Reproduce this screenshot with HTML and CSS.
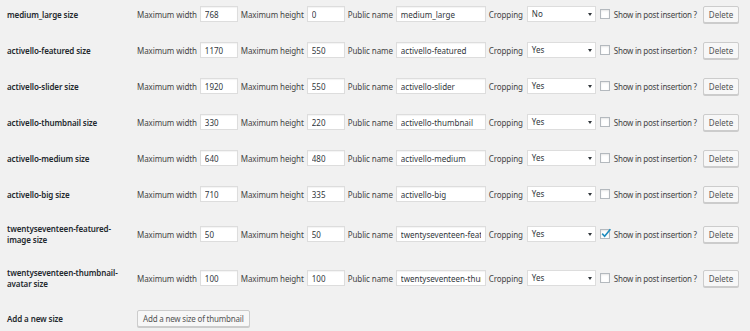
FILE: index.html
```html
<!DOCTYPE html>
<html lang="en">
<head>
    <meta charset="UTF-8">
    <title>Thumbnail sizes</title>
    <link rel="stylesheet" href="styles.css">
</head>
<body>
    <table class="form-table">
        <tr>
            <th>medium_large size</th>
            <td>
                <div class="fields">
                    <label>Maximum width</label><input class="num" type="text" value="768">
                    <label>Maximum height</label><input class="num" type="text" value="0">
                    <label>Public name</label><input class="name" type="text" value="medium_large">
                    <label>Cropping</label><div class="select">No</div>
                    <span class="checkbox"></span><label class="show">Show in post insertion ?</label>
                    <button class="button delete">Delete</button>
                </div>
            </td>
        </tr>
        <tr>
            <th>activello-featured size</th>
            <td>
                <div class="fields">
                    <label>Maximum width</label><input class="num" type="text" value="1170">
                    <label>Maximum height</label><input class="num" type="text" value="550">
                    <label>Public name</label><input class="name" type="text" value="activello-featured">
                    <label>Cropping</label><div class="select">Yes</div>
                    <span class="checkbox"></span><label class="show">Show in post insertion ?</label>
                    <button class="button delete">Delete</button>
                </div>
            </td>
        </tr>
        <tr>
            <th>activello-slider size</th>
            <td>
                <div class="fields">
                    <label>Maximum width</label><input class="num" type="text" value="1920">
                    <label>Maximum height</label><input class="num" type="text" value="550">
                    <label>Public name</label><input class="name" type="text" value="activello-slider">
                    <label>Cropping</label><div class="select">Yes</div>
                    <span class="checkbox"></span><label class="show">Show in post insertion ?</label>
                    <button class="button delete">Delete</button>
                </div>
            </td>
        </tr>
        <tr>
            <th>activello-thumbnail size</th>
            <td>
                <div class="fields">
                    <label>Maximum width</label><input class="num" type="text" value="330">
                    <label>Maximum height</label><input class="num" type="text" value="220">
                    <label>Public name</label><input class="name" type="text" value="activello-thumbnail">
                    <label>Cropping</label><div class="select">Yes</div>
                    <span class="checkbox"></span><label class="show">Show in post insertion ?</label>
                    <button class="button delete">Delete</button>
                </div>
            </td>
        </tr>
        <tr>
            <th>activello-medium size</th>
            <td>
                <div class="fields">
                    <label>Maximum width</label><input class="num" type="text" value="640">
                    <label>Maximum height</label><input class="num" type="text" value="480">
                    <label>Public name</label><input class="name" type="text" value="activello-medium">
                    <label>Cropping</label><div class="select">Yes</div>
                    <span class="checkbox"></span><label class="show">Show in post insertion ?</label>
                    <button class="button delete">Delete</button>
                </div>
            </td>
        </tr>
        <tr>
            <th>activello-big size</th>
            <td>
                <div class="fields">
                    <label>Maximum width</label><input class="num" type="text" value="710">
                    <label>Maximum height</label><input class="num" type="text" value="335">
                    <label>Public name</label><input class="name" type="text" value="activello-big">
                    <label>Cropping</label><div class="select">Yes</div>
                    <span class="checkbox"></span><label class="show">Show in post insertion ?</label>
                    <button class="button delete">Delete</button>
                </div>
            </td>
        </tr>
        <tr>
            <th>twentyseventeen-featured-image size</th>
            <td>
                <div class="fields">
                    <label>Maximum width</label><input class="num" type="text" value="50">
                    <label>Maximum height</label><input class="num" type="text" value="50">
                    <label>Public name</label><input class="name" type="text" value="twentyseventeen-featured-image">
                    <label>Cropping</label><div class="select">Yes</div>
                    <span class="checkbox checked">
                        <svg viewBox="0 0 12 12" width="12" height="12"><path d="M2.2 5.6 L4.6 8.2 L10.4 1.2" fill="none" stroke="#1e8cbe" stroke-width="1.6"/></svg>
                    </span><label class="show">Show in post insertion ?</label>
                    <button class="button delete">Delete</button>
                </div>
            </td>
        </tr>
        <tr>
            <th>twentyseventeen-thumbnail-avatar size</th>
            <td>
                <div class="fields">
                    <label>Maximum width</label><input class="num" type="text" value="100">
                    <label>Maximum height</label><input class="num" type="text" value="100">
                    <label>Public name</label><input class="name" type="text" value="twentyseventeen-thumbnail-avatar">
                    <label>Cropping</label><div class="select">Yes</div>
                    <span class="checkbox"></span><label class="show">Show in post insertion ?</label>
                    <button class="button delete">Delete</button>
                </div>
            </td>
        </tr>
        <tr>
            <th>Add a new size</th>
            <td><button class="button add">Add a new size of thumbnail</button></td>
        </tr>
    </table>
</body>
</html>
```

FILE: styles.css
```css
body {
    margin: 0;
    background-color: #f1f1f1;
    color: #444;
    font-family: "Noto Sans", "Open Sans", sans-serif;
    font-size: 8px;
    overflow: hidden;
}
.form-table {
    border-collapse: collapse;
    margin-top: -4px;
}
.form-table th {
    width: 137px;
    box-sizing: border-box;
    padding: 11px 10px 11px 7px;
    text-align: left;
    vertical-align: middle;
    font-weight: 600;
    color: #23282d;
    line-height: 11px;
    letter-spacing: -0.1px;
}
.form-table td {
    padding: 9.5px 0;
    vertical-align: middle;
}
.fields {
    display: flex;
    align-items: center;
    gap: 3px;
    white-space: nowrap;
}
.fields label {
    letter-spacing: -0.1px;
}
.fields input {
    height: 16px;
    box-sizing: border-box;
    border: 1px solid #ddd;
    box-shadow: inset 0 1px 1px rgba(0,0,0,0.05);
    background: #fff;
    color: #32373c;
    font-family: inherit;
    font-size: 8px;
    padding: 0 4px;
    margin: 0;
    outline: none;
}
.fields input.num {
    width: 38px;
}
.fields input.name {
    width: 90px;
}
.select {
    position: relative;
    width: 69px;
    height: 16px;
    box-sizing: border-box;
    border: 1px solid #ddd;
    background: #fff;
    color: #32373c;
    padding: 0 4px;
    line-height: 14px;
    margin-left: 1px;
}
.select::after {
    content: "";
    position: absolute;
    right: 3px;
    top: 6px;
    border-left: 2px solid transparent;
    border-right: 2px solid transparent;
    border-top: 3px solid #32373c;
}
.checkbox {
    position: relative;
    width: 10px;
    height: 10px;
    box-sizing: border-box;
    border: 1px solid #b4b9be;
    background: #fff;
    box-shadow: inset 0 1px 2px rgba(0,0,0,0.1);
    margin-left: 1px;
}
.checkbox svg {
    position: absolute;
    left: -1px;
    top: -2px;
}
.fields .show {
    margin-left: 1px;
    letter-spacing: -0.25px;
}
.button {
    height: 17px;
    box-sizing: border-box;
    border: 1px solid #ccc;
    border-radius: 2px;
    background: #f7f7f7;
    box-shadow: 0 1px 0 #ccc;
    color: #555;
    font-family: inherit;
    font-size: 8px;
    padding: 0 5px;
    margin: 0;
    cursor: pointer;
}
.delete {
    margin-left: 3px;
}
.add {
    letter-spacing: -0.2px;
}
```
